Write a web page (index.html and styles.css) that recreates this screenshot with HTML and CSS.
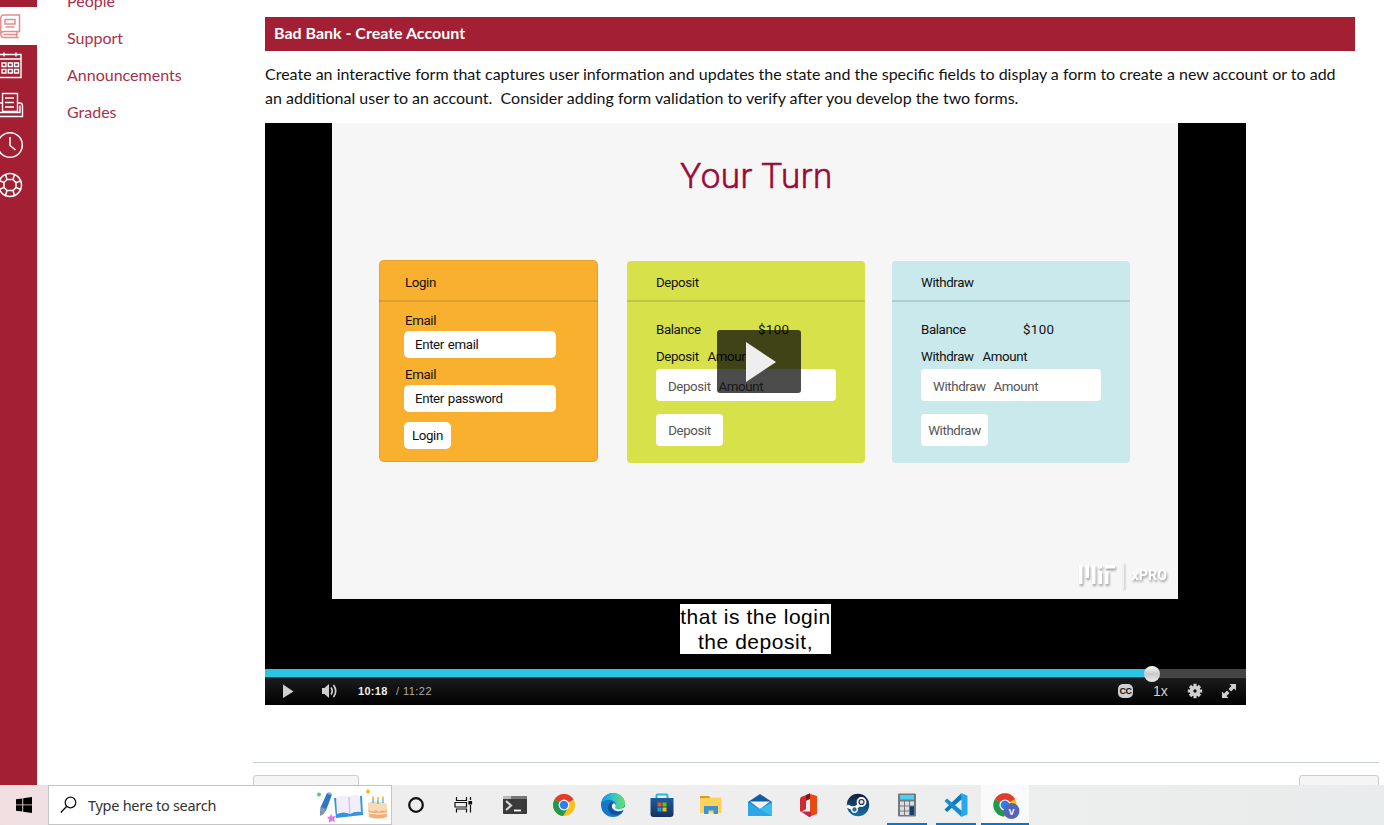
FILE: index.html
```html
<!DOCTYPE html>
<html lang="en">
<head>
<meta charset="utf-8">
<title>Bad Bank - Create Account</title>
<link rel="stylesheet" href="styles.css">
</head>
<body>
<div class="page">
  <nav class="rail">
    <div class="rail-item rail-active">
      <svg width="24" height="26" viewBox="0 0 24 26" fill="none" stroke="#e58c8c" stroke-width="1.5"><path d="M4 2h15.500v16.500H4M4 2C2 2 .8 3.200.8 5v16c0 2 1 3.500 3 3.500h15M4 18.500c-2 0-3.200 1-3.200 3M3.500 21.500H17v-3M16.500 21v3.500M5 6.500h10v4.500H5zM5.500 14h9"/></svg>
    </div>
    <div class="rail-item">
      <svg width="24" height="28" viewBox="0 0 24 28" fill="none" stroke="#fff" stroke-width="1.4"><path d="M0 3.500h21V26.500H0M0 8h21M4 1.500v4M16 1.500v4M2 12h4v3.500H2zM8.300 12h4v3.500h-4zM14.500 12h4v3.500h-4zM2 18.500h4V22H2zM8.300 18.500h4V22h-4zM14.500 18.500h4V22h-4z"/></svg>
    </div>
    <div class="rail-item">
      <svg width="24" height="28" viewBox="0 0 24 28" fill="none" stroke="#fff" stroke-width="1.4"><path d="M2.500 20.500V2.500h15v18H2.500M5 7h9M5 11.500h9M5 16h9M0 12h2.500M17.500 12H20q2.500 0 2.500 3v10.500H0M0 21.500h20v-7"/></svg>
    </div>
    <div class="rail-item">
      <svg width="24" height="28" viewBox="0 0 24 28" fill="none" stroke="#fff" stroke-width="1.5"><circle cx="10" cy="14" r="12.300"/><path d="M10 6v8.500l5.500 4.500"/></svg>
    </div>
    <div class="rail-item">
      <svg width="24" height="28" viewBox="0 0 24 28" fill="none" stroke="#fff" stroke-width="1.5"><circle cx="10" cy="14" r="11.500"/><path d="M7 8.500h6l3 3.300v4.800L13 19.500H7L4 16.500v-5zM7 8.500 5.500 3.500M13 8.500 14.500 3.500M16 11.800l4.800-2M16 16.500l4.800 2M13 19.500l1.500 5M7 19.500 5.500 24.500M4 16.500l-5 2M4 11.500l-5-2"/></svg>
    </div>
  </nav>
  <div class="menu">
    <a>People</a>
    <a>Support</a>
    <a>Announcements</a>
    <a>Grades</a>
  </div>
  <main class="content">
    <h2 class="banner">Bad Bank - Create Account</h2>
    <p class="intro"><span>Create an interactive form that captures user information and updates the state and the specific fields to display a form to create a new account or to add</span><br><span>an additional user to an account.&nbsp; Consider adding form validation to verify after you develop the two forms.</span></p>
    <div class="video">
      <div class="slide">
        <div class="slide-title">Your Turn</div>
        <div class="cards">
          <section class="card card-login">
            <div class="card-head">Login</div>
            <div class="card-body">
              <div class="label">Email</div>
              <div class="input">Enter email</div>
              <div class="label">Email</div>
              <div class="input">Enter password</div>
              <div class="button">Login</div>
            </div>
          </section>
          <section class="card card-deposit">
            <div class="card-head">Deposit</div>
            <div class="card-body">
              <div class="balance"><span>Balance</span><span class="money">$100</span></div>
              <div class="label">Deposit&nbsp; Amount</div>
              <div class="input">Deposit&nbsp; Amount</div>
              <div class="button">Deposit</div>
            </div>
          </section>
          <section class="card card-withdraw">
            <div class="card-head">Withdraw</div>
            <div class="card-body">
              <div class="balance"><span>Balance</span><span class="money">$100</span></div>
              <div class="label">Withdraw&nbsp; Amount</div>
              <div class="input">Withdraw&nbsp; Amount</div>
              <div class="button">Withdraw</div>
            </div>
          </section>
        </div>
        <div class="brand">
          <svg width="38" height="22" viewBox="0 0 38 22" fill="#fff"><path d="M1 1h3.500v19H1zM7.500 1H11v13H7.500zM14 1h3.500v19H14zM20.500 1H24v3.500h-3.500zM20.500 7H24v13h-3.500zM27 1h10v3.500H27zM27 7h3.500v13H27z"/></svg>
          <i class="brand-line"></i>
          <span>xPRO</span>
        </div>
      </div>
      <div class="big-play"><svg width="30" height="40" viewBox="0 0 30 40"><path d="M0 0 30 20 0 40z" fill="#eee"/></svg></div>
      <div class="caption">that is the login<br>the deposit,</div>
      <div class="progress"><div class="played"></div><i class="knob"></i></div>
      <div class="controls">
        <svg class="ctl-play" width="12" height="16" viewBox="0 0 12 16"><path d="M1 1.500 11.500 8.500 1 15z" fill="#d0d0d0"/></svg>
        <svg class="ctl-vol" width="17" height="16" viewBox="0 0 17 16"><path d="M1 5h2.500L8 1v14L3.500 11H1z" fill="#d0d0d0"/><path d="M10 4.500q2.400 3.500 0 7M12.500 2q4.400 6 0 12" fill="none" stroke="#d0d0d0" stroke-width="1.700"/></svg>
        <span class="now">10:18</span><span class="total">/ 11:22</span>
        <span class="cc">CC</span>
        <span class="speed">1x</span>
        <svg class="ctl-gear" width="16" height="16" viewBox="0 0 16 16"><g stroke="#d0d0d0" stroke-width="3.200"><path d="M8 .8v14.400M.8 8h14.400M3 3l10 10M13 3 3 13"/></g><circle cx="8" cy="8" r="5.300" fill="#d0d0d0"/><circle cx="8" cy="8" r="1.700" fill="#111"/></svg>
        <svg class="ctl-full" width="16" height="16" viewBox="0 0 16 16" fill="#d0d0d0"><path d="M8.500 1H15v6.500l-2-2-3 3L7.500 6l3-3zM1 8.500l2 2 3-3L8.500 10l-3 3 2 2H1z"/></svg>
      </div>
    </div>
    <div class="foot"><span class="foot-prev"></span><span class="foot-next"></span></div>
  </main>
</div>
<footer class="taskbar">
  <div class="start"><svg width="16" height="16" viewBox="0 0 16 16"><path d="M0 2.300 6.300 1.400v6H0zM7.200 1.300 16 0v7.400H7.200zM0 8.300h6.300v6.200L0 13.700zM7.200 8.300H16V16l-8.800-1.300z"/></svg></div>
  <div class="search">
    <svg class="lens" width="18" height="18" viewBox="0 0 18 18" fill="none" stroke="#111" stroke-width="1.300"><circle cx="10.500" cy="6.500" r="5.300"/><path d="M6.800 10.300.8 16.500"/></svg>
    <span>Type here to search</span>
    <svg class="doodle" width="74" height="36" viewBox="0 0 74 36">
      <circle cx="4" cy="7.500" r="2" fill="#4bd07c"/><circle cx="53" cy="4.500" r="2" fill="#fdb515"/>
      <path d="M12 6l5 1.500-6 16-6 5 .5-8z" fill="#2f78bd"/><path d="M6.500 20l4.500 2-2 5-4 2z" fill="#8a96a5"/><path d="M13 6l3 1" stroke="#88b8e0" stroke-width="2"/>
      <path d="M16 27l1.500 2.500 3.500-.5-2 3 1.500 3-3.500-1-3 1.500 0-3-2-2.500 3-.5z" fill="#df78f5"/>
      <path d="M19 11 47 9l1 19-27 3z" fill="#3596e0"/><path d="M21 10q7-3 13 0q6-4 11-1l1 16q-6-1-11 2q-6-3-13 0z" fill="#f3effa"/><path d="M34 10l.8 17" stroke="#cfc7e2" stroke-width="1.500"/>
      <path d="M53 19h19v11q-9 3-18 0z" fill="#f2b277"/><path d="M53 16q9-4 19 1v6q-3 2-5 0-3 3-6 0-4 3-8-1z" fill="#f8d9b8"/><path d="M58 12v4M63 13v4M68 12v4" stroke="#46b9d0" stroke-width="1.400"/><path d="M58 9.500v3M63 10v3M68 9.500v3" stroke="#ffb02e" stroke-width="1.600"/><path d="M54 26q9 2 18 0" stroke="#fff" fill="none"/>
    </svg>
  </div>
  <div class="apps">
    <div class="app"><svg width="24" height="24" viewBox="0 0 24 24"><circle cx="11" cy="12" r="6.800" fill="none" stroke="#111" stroke-width="2.200"/></svg></div>
    <div class="app"><svg width="24" height="24" viewBox="0 0 24 24" fill="none" stroke="#111" stroke-width="1.200"><path d="M2.500 4v3.500h10V4M2.500 19.500v-3.500h10v3.500M1 9.500v4.500h11.500V9.500zM16.500 4v3M16.500 12v7.500"/><path d="M15 8.500h2.500V11H15z" fill="#111"/></svg></div>
    <div class="app"><svg width="24" height="24" viewBox="0 0 24 24"><rect y="3" width="24" height="18" rx="1" fill="#3a3a3a"/><path d="M0 6V3h8v3z" fill="#bbb"/><path d="M8 3h16v3H8z" fill="#777"/><path d="m3 8 5 4.500L3 17" fill="none" stroke="#d5d5d5" stroke-width="2.200"/><path d="M11 17.500h7" stroke="#fff" stroke-width="1.800"/></svg></div>
    <div class="app"><svg width="24" height="24" viewBox="0 0 24 24"><circle cx="12" cy="12" r="11" fill="#fbc116"/><path d="M12 12 2.500 6.500a11 11 0 0 1 19 0z" fill="#e33b2e"/><path d="M12 12 2.500 6.500A11 11 0 0 0 11 23l5.500-9z" fill="#21984b"/><circle cx="12" cy="12" r="5.400" fill="#fff"/><circle cx="12" cy="12" r="4.200" fill="#327df0"/></svg></div>
    <div class="app"><svg width="24" height="24" viewBox="0 0 24 24"><defs><linearGradient id="eg"><stop stop-color="#1b8fd8"/><stop offset=".5" stop-color="#2fc4cf"/><stop offset="1" stop-color="#6be05b"/></linearGradient></defs><circle cx="12" cy="12" r="12" fill="#1478c8"/><path d="M0 11C1 4 6 0 12 0c7 0 12 5 12 10 0 4-3 6-7 6-3 0-4-1-3-2 2-3 0-6-4-7C6 6 2 8 0 11z" fill="url(#eg)"/><path d="M10 9c-5 3-4 12 4 13 4 0 7-2 9-5-4 3-11 2-12-3 0-2 1-3 2-4z" fill="#124f9d"/><path d="M12 10.500c-2 2-1.500 5 2 7 3.500 1.500 7 .5 9-1l-1.500 3L25 21v-8l-3 2c-3 2-8 1-8-.5 1-1 1-3-.5-4z" fill="#efefef"/></svg></div>
    <div class="app"><svg width="24" height="24" viewBox="0 0 24 24"><defs><linearGradient id="sg" x2="0" y2="1"><stop stop-color="#1d5d9b"/><stop offset="1" stop-color="#18315d"/></linearGradient></defs><path d="M6.500 7V2.500q0-1 1-1h9q1 0 1 1V7" fill="none" stroke="#27b6e8" stroke-width="2"/><path d="M.5 5h23v16q0 3-3 3h-17q-3 0-3-3z" fill="url(#sg)"/><path d="M7.500 9.500h4v4h-4z" fill="#f25022"/><path d="M12.500 9.500h4v4h-4z" fill="#7fba00"/><path d="M7.500 14.500h4v4h-4z" fill="#00a4ef"/><path d="M12.500 14.500h4v4h-4z" fill="#ffb900"/></svg></div>
    <div class="app"><svg width="24" height="24" viewBox="0 0 24 24"><path d="M1 3h9l2 2.500H1z" fill="#dc9c11"/><path d="M1 6 12 4.500h10.500V20H1z" fill="#ffd35b"/><path d="M5 21v-8h14v8h-4.500v-3.500h-5V21z" fill="#3e91d6"/></svg></div>
    <div class="app"><svg width="24" height="24" viewBox="0 0 24 24"><path d="M0 9 12 1l12 8z" fill="#105ca8"/><path d="M0 9h24v14H0z" fill="#1785cf"/><path d="M2 8.500h20L12 16z" fill="#f5f5f5"/><path d="M0 9.500 12 16l12-6.500V23H0z" fill="#2ea7e8"/><path d="m24 9.500-12 6.500 12 7z" fill="#39bdf1"/></svg></div>
    <div class="app"><svg width="24" height="24" viewBox="0 0 24 24"><path d="M4 4 13 .5V6L9 8v8l-4 2.500H3V6z" fill="#cc2b31"/><path d="M12 .5 20 3v18l-7 2.500V6z" fill="#e84a13"/><path d="M4 18.500h10v5L12 24z" fill="#c9224b"/><path d="M13 .5 9 2v5l4-1z" fill="#7e1615"/></svg></div>
    <div class="app"><svg width="24" height="24" viewBox="0 0 24 24"><defs><linearGradient id="st" x2="0" y2="1"><stop stop-color="#141c3c"/><stop offset="1" stop-color="#1471a8"/></linearGradient></defs><circle cx="12" cy="12" r="11.200" fill="url(#st)"/><path d="M1 13l7 3 5-4 0-4" fill="none" stroke="#fff" stroke-width="3.500"/><circle cx="15.500" cy="9" r="4" fill="#18284a" stroke="#fff" stroke-width="1.800"/><circle cx="15.500" cy="9" r="2" fill="#ddd"/><circle cx="8.500" cy="16.500" r="2.800" fill="#267099" stroke="#fff" stroke-width="1.300"/></svg></div>
    <div class="app app-open"><svg width="24" height="24" viewBox="0 0 24 24"><rect x="3" y=".5" width="18" height="23" rx="1" fill="#75797e"/><path d="M5 2h14v4.500H5z" fill="#48d3f5"/><path d="M5 8.500h4v4H5zM10 8.500h4v4h-4zM15 8.500h4v4h-4zM5 13.500h4v4H5zM10 13.500h4v4h-4zM5 18.500h4v3.500H5zM10 18.500h4v3.500h-4z" fill="#ddd"/><path d="M15 13.500h4V22h-4z" fill="#113e75"/></svg></div>
    <div class="app app-open"><svg width="24" height="24" viewBox="0 0 24 24"><path d="m17.500 0 .5 6L3 19l-2.500-2.500z" fill="#0f77bd"/><path d="m.5 8 2.500-2.500L18 18l-.5 6z" fill="#158cd1"/><path d="m17.500 0 6 2.800v18.400l-6 2.800z" fill="#29a7ee"/></svg></div>
    <div class="app app-open app-focus"><svg width="27" height="27" viewBox="0 0 27 27"><circle cx="12" cy="12" r="11.500" fill="#fbc116"/><path d="M12 12 2 6a11.500 11.500 0 0 1 20 0z" fill="#e33b2e"/><path d="M12 12 2 6a11.500 11.500 0 0 0 9 17.500l5.500-9z" fill="#21984b"/><circle cx="12" cy="12" r="5.600" fill="#fff"/><circle cx="12" cy="12" r="4.400" fill="#327df0"/><circle cx="18.500" cy="18" r="8" fill="#5464b8"/><text class="badge" x="18.500" y="21.500" text-anchor="middle" fill="#fff">V</text></svg></div>
  </div>
</footer>
</body>
</html>
```

FILE: styles.css
```css
* { box-sizing: border-box; }
body { margin: 0; width: 1384px; height: 825px; overflow: hidden; background: #fff; font-family: Lato, sans-serif; display: flex; flex-direction: column; }
svg { display: block; flex: none; }

.page { height: 785px; display: flex; overflow: hidden; }
.rail { width: 37px; background: #a31f34; padding-top: 7px; flex: none; overflow: hidden; }
.rail-item { height: 40px; display: flex; align-items: center; }
.rail-active { height: 38px; background: #fff; }
.menu { width: 216px; padding-left: 30px; margin-top: -18px; flex: none; display: flex; flex-direction: column; }
.menu a { font-size: 16px; line-height: 37px; height: 37px; color: #a9304a; }

.content { width: 1126px; padding-top: 17px; flex: none; }
.banner { margin: 0 24px 0 12px; height: 34px; line-height: 31px; padding-left: 9px; background: #a31f34; color: #fff; font-size: 16px; font-weight: 700; }
.intro { margin: 11px 0 13px 12px; font-size: 16px; line-height: 24px; color: #111; white-space: nowrap; }

.video { position: relative; width: 981px; height: 582px; margin-left: 12px; background: #000; display: flex; flex-direction: column; align-items: center; }
.slide { align-self: flex-start; margin-left: 67px; width: 846px; height: 476px; background: #f6f6f6; display: flex; flex-direction: column; font-family: Roboto, sans-serif; flex: none; }
.slide-title { margin-top: 30px; padding-left: 3px; height: 46px; line-height: 47px; text-align: center; color: #9b0a35; font-weight: 300; font-size: 35px; letter-spacing: .5px; -webkit-text-stroke: .6px #9b0a35; }
.cards { margin-top: 61px; padding-left: 47px; display: flex; }
.card { font-size: 13.3px; letter-spacing: -.38px; white-space: nowrap; color: #111; border-radius: 4px; }
.card-head { height: 42px; padding-left: 25px; line-height: 45px; border-bottom: 2px solid rgba(80,80,80,.18); }
.card-body { padding-left: 25px; }
.label { height: 20px; line-height: 20px; word-spacing: 1.500px; }
.money { letter-spacing: .4px; }
.input, .button { background: #fff; border-radius: 4px; word-spacing: 1px; }
.card-login { width: 219px; height: 202px; background: #fab02f; border-radius: 5px; box-shadow: inset 0 0 0 1px rgba(120,90,30,.15); }
.card-login .card-head, .card-login .card-body { padding-left: 26px; }
.card-login .card-body { padding-top: 9px; }
.card-login .input { width: 152px; height: 27px; line-height: 27px; padding-left: 11px; margin: 1px 0 7px -1px; border-radius: 5px; }
.card-login .label { height: 19px; }
.card-login .input + .label { margin-top: 7px; }
.card-login .button { width: 47px; height: 27px; line-height: 28px; text-align: center; margin: 10px 0 0 -1px; border-radius: 5px; }
.card-deposit { margin-left: 29px; }
.card-withdraw { margin-left: 27px; }
.card-deposit, .card-withdraw { width: 238px; height: 202px; margin-top: 1px; }
.card-deposit { background: #d7e14a; }
.card-withdraw { background: #c9e9ec; }
.card-deposit .card-head, .card-withdraw .card-head { height: 41px; line-height: 43px; padding-left: 29px; }
.card-deposit .card-body, .card-withdraw .card-body { padding: 17px 0 0 29px; }
.balance { display: flex; height: 22px; line-height: 22px; margin-bottom: 5px; }
.balance span:first-child { width: 102px; }
.card-deposit .label, .card-withdraw .label { line-height: 22px; }
.card-deposit .input, .card-withdraw .input { width: 180px; height: 32px; line-height: 35px; padding-left: 12px; margin-top: 3px; color: #555; }
.card-deposit .button, .card-withdraw .button { width: 67px; height: 32px; line-height: 33px; margin-top: 13px; text-align: center; color: #555; }
.brand { margin: 98px 11px 0 auto; height: 28px; display: flex; align-items: center; filter: drop-shadow(1px 2px 1px rgba(0,0,0,.35)); }
.brand-line { width: 1px; height: 26px; margin: 0 7px 0 7px; background: #f2f2f2; }
.brand span { color: #fff; font: 700 14px Roboto, sans-serif; letter-spacing: .2px; }

.big-play { position: absolute; left: 452px; top: 207px; width: 84px; height: 63px; border-radius: 3px; background: rgba(0,0,0,.7); display: flex; align-items: center; padding: 0 0 0 29px; }
.caption { margin-top: 5px; height: 50px; width: 151px; background: #fff; color: #000; font: 21px/25px "Liberation Sans", sans-serif; letter-spacing: .55px; text-align: center; white-space: nowrap; }
.caption::first-line { line-height: 23px; }
.progress { margin-top: 15px; width: 981px; height: 8px; background: #444; position: relative; flex: none; }
.played { width: 887px; height: 8px; background: #2bc4e2; }
.knob { position: absolute; left: 879px; top: -3px; width: 16px; height: 16px; border-radius: 50%; background: linear-gradient(#fff, #c8c8c8 50%, #eee); }
.controls { width: 981px; height: 28px; border-top: 1px solid #484848; background: linear-gradient(#1c1c1c, #000); display: flex; align-items: center; padding: 0 0 2px 17px; color: #d0d0d0; font-family: "Liberation Sans", sans-serif; }
.ctl-vol { margin-left: 27px; }
.now { width: 38px; margin-left: 20px; font-size: 11px; font-weight: 700; letter-spacing: .3px; color: #eee; }
.total { font-size: 11px; letter-spacing: .45px; color: #aaa; }
.cc { margin-left: auto; width: 15px; height: 14px; border-radius: 5px; background: #d0d0d0; color: #111; font-size: 9px; line-height: 14px; font-weight: 700; text-align: center; letter-spacing: -.5px; }
.speed { width: 16px; margin-left: 20px; font-size: 14px; }
.ctl-gear { margin-left: 18px; }
.ctl-full { margin: 0 9px 0 18px; }

.foot { margin-top: 57px; height: 23px; border-top: 1px solid #c7cdd1; padding-top: 12px; display: flex; justify-content: space-between; }
.foot span { height: 30px; background: #f5f5f5; border: 1px solid #c7cdd1; border-radius: 3px; }
.foot-prev { width: 106px; }
.foot-next { width: 80px; }

.taskbar { height: 40px; background: linear-gradient(90deg, #f1dee1 0, #eee 400px, #eee 900px, #e9ecec 100%); display: flex; flex: none; }
.start { width: 48px; display: flex; align-items: center; justify-content: center; }
.search { width: 344px; height: 40px; border: 1px solid #c5c5c5; background: #fff; display: flex; align-items: center; padding-left: 11px; font: 14.500px "Noto Sans", sans-serif; color: #333; white-space: nowrap; }
.search span { width: 227px; margin-left: 10px; letter-spacing: -.28px; }
.apps { display: flex; gap: 1px; margin-left: 1px; }
.app { width: 48px; height: 40px; display: flex; align-items: center; justify-content: center; }
.app-open { background: linear-gradient(#0078d7, #0078d7) center bottom / 40px 2px no-repeat; }
.app-focus { background: linear-gradient(#0078d7, #0078d7) center bottom / 48px 2px no-repeat #fafafa; }
.app-focus svg { margin: 2px 0 0 2px; }
.badge { font: 700 9px "Liberation Sans", sans-serif; }
```
